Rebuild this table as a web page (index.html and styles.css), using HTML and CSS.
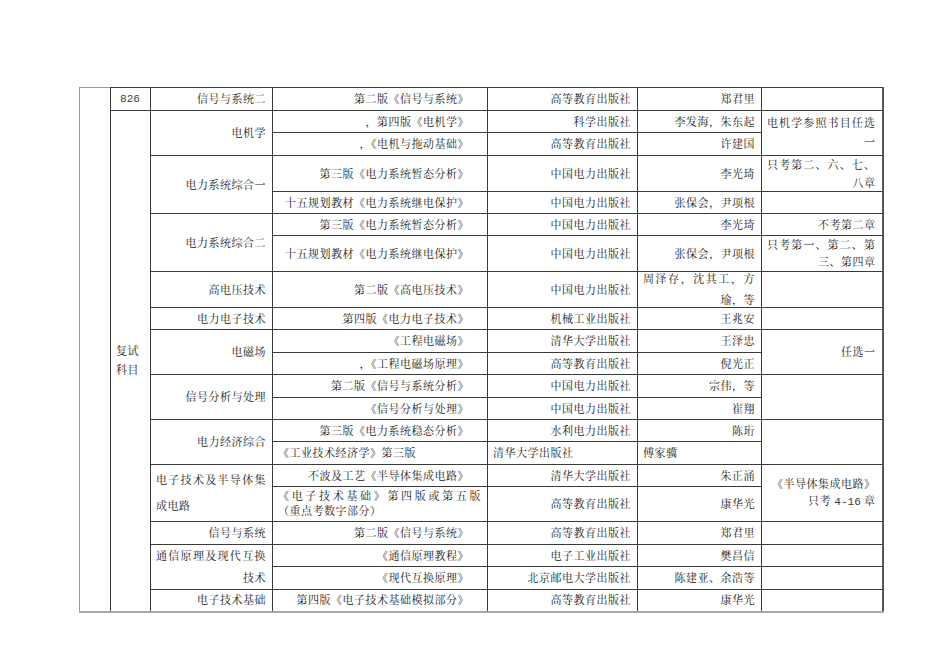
FILE: index.html
```html
<!DOCTYPE html>
<html lang="zh-CN">
<head>
<meta charset="utf-8">
<title>复试科目参考书目</title>
<link rel="stylesheet" href="styles.css">
</head>
<body>
<div class="page">
<table class="books">
  <colgroup>
    <col class="c1"><col class="c2"><col class="c3"><col class="c4"><col class="c5"><col class="c6"><col class="c7">
  </colgroup>
  <tbody>
    <tr class="r23">
      <td rowspan="21" class="blank"></td>
      <td class="center num">826</td>
      <td>信号与系统二</td>
      <td class="bk">第二版《信号与系统》</td>
      <td>高等教育出版社</td>
      <td>郑君里</td>
      <td></td>
    </tr>
    <tr class="r22">
      <td rowspan="20" class="subj lh19">复试科目</td>
      <td rowspan="2">电机学</td>
      <td class="bk">，第四版《电机学》</td>
      <td>科学出版社</td>
      <td>李发海，朱东起</td>
      <td rowspan="2"><div class="ml lh19"><span class="jl">电机学参照书目任选</span><span class="ln">一</span></div></td>
    </tr>
    <tr class="r23">
      <td class="bk">，《电机与拖动基础》</td>
      <td>高等教育出版社</td>
      <td>许建国</td>
    </tr>
    <tr class="r36">
      <td rowspan="2">电力系统综合一</td>
      <td class="bk">第三版《电力系统暂态分析》</td>
      <td>中国电力出版社</td>
      <td>李光琦</td>
      <td><div class="ml lh18"><span class="jl">只考第二、六、七、</span><span class="ln">八章</span></div></td>
    </tr>
    <tr class="r22">
      <td class="bk">十五规划教材《电力系统继电保护》</td>
      <td>中国电力出版社</td>
      <td>张保会，尹项根</td>
      <td></td>
    </tr>
    <tr class="r22">
      <td rowspan="2">电力系统综合二</td>
      <td class="bk">第三版《电力系统暂态分析》</td>
      <td>中国电力出版社</td>
      <td>李光琦</td>
      <td>不考第二章</td>
    </tr>
    <tr class="r36">
      <td class="bk">十五规划教材《电力系统继电保护》</td>
      <td>中国电力出版社</td>
      <td>张保会，尹项根</td>
      <td><div class="ml lh17"><span class="jl">只考第一、第二、第</span><span class="ln">三、第四章</span></div></td>
    </tr>
    <tr class="r36">
      <td>高电压技术</td>
      <td class="bk">第二版《高电压技术》</td>
      <td>中国电力出版社</td>
      <td><div class="ml lh21"><span class="jl">周泽存，沈其工，方</span><span class="ln">瑜，等</span></div></td>
      <td></td>
    </tr>
    <tr class="r22">
      <td>电力电子技术</td>
      <td class="bk">第四版《电力电子技术》</td>
      <td>机械工业出版社</td>
      <td>王兆安</td>
      <td></td>
    </tr>
    <tr class="r23">
      <td rowspan="2">电磁场</td>
      <td class="bk">《工程电磁场》</td>
      <td>清华大学出版社</td>
      <td>王泽忠</td>
      <td rowspan="2">任选一</td>
    </tr>
    <tr class="r22">
      <td class="bk">，《工程电磁场原理》</td>
      <td>高等教育出版社</td>
      <td>倪光正</td>
    </tr>
    <tr class="r23">
      <td rowspan="2">信号分析与处理</td>
      <td class="bk">第二版《信号与系统分析》</td>
      <td>中国电力出版社</td>
      <td>宗伟，等</td>
      <td rowspan="2"></td>
    </tr>
    <tr class="r22">
      <td class="bk">《信号分析与处理》</td>
      <td>中国电力出版社</td>
      <td>崔翔</td>
    </tr>
    <tr class="r22">
      <td rowspan="2">电力经济综合</td>
      <td class="bk">第三版《电力系统稳态分析》</td>
      <td>水利电力出版社</td>
      <td>陈珩</td>
      <td rowspan="2"></td>
    </tr>
    <tr class="r23">
      <td class="left">《工业技术经济学》第三版</td>
      <td class="left">清华大学出版社</td>
      <td class="left">傅家骥</td>
    </tr>
    <tr class="r22">
      <td rowspan="2" class="left"><div class="ml lh26"><span class="jl">电子技术及半导体集</span><span class="ln">成电路</span></div></td>
      <td class="bk">不波及工艺《半导体集成电路》</td>
      <td>清华大学出版社</td>
      <td>朱正涌</td>
      <td rowspan="2"><div class="ml lh17"><span class="ln">《半导体集成电路》</span><span class="ln">只考 <span class="digits">4-16</span> 章</span></div></td>
    </tr>
    <tr class="r35">
      <td class="left"><div class="ml lh15"><span class="jl">《电子技术基础》第四版或第五版</span><span class="ln">（重点考数字部分）</span></div></td>
      <td>高等教育出版社</td>
      <td>康华光</td>
    </tr>
    <tr class="r23">
      <td>信号与系统</td>
      <td class="bk">第二版《信号与系统》</td>
      <td>高等教育出版社</td>
      <td>郑君里</td>
      <td></td>
    </tr>
    <tr class="r22">
      <td rowspan="2"><div class="ml lh22"><span class="jl">通信原理及现代互换</span><span class="ln">技术</span></div></td>
      <td class="bk">《通信原理教程》</td>
      <td>电子工业出版社</td>
      <td>樊昌信</td>
      <td></td>
    </tr>
    <tr class="r23">
      <td class="bk">《现代互换原理》</td>
      <td>北京邮电大学出版社</td>
      <td>陈建亚、余浩等</td>
      <td></td>
    </tr>
    <tr class="r22">
      <td>电子技术基础</td>
      <td class="bk">第四版《电子技术基础模拟部分》</td>
      <td>高等教育出版社</td>
      <td>康华光</td>
      <td></td>
    </tr>
  </tbody>
</table>
</div>
</body>
</html>
```

FILE: styles.css
```css
html, body {
  margin: 0;
  padding: 0;
  background: #ffffff;
}

.page {
  padding: 87px 0 0 79px;
}

.books {
  border-collapse: collapse;
  table-layout: fixed;
  width: 803px;
  font-family: "Liberation Serif", "Noto Serif CJK SC", "Noto Sans CJK SC", serif;
  font-size: 11px;
  letter-spacing: 0.5px;
  color: #1a1a1a;
  border-top: 1px solid #9a9a9a;
  border-left: 1px solid #9a9a9a;
  border-right: 2px solid #555555;
  border-bottom: 2px solid #a8a8a8;
}

.c1 { width: 31px; }
.c2 { width: 40px; }
.c3 { width: 122px; }
.c4 { width: 215px; }
.c5 { width: 150px; }
.c6 { width: 124px; }
.c7 { width: 121px; }

.books td {
  border: 1px solid #3a3a3a;
  padding: 0 6px 0 5px;
  text-align: right;
  vertical-align: middle;
  line-height: 14px;
  white-space: normal;
  overflow: visible;
}

.books td.blank {
  border-left: 1px solid #9a9a9a;
  border-top: 1px solid #9a9a9a;
  border-bottom: 2px solid #a8a8a8;
}

.books td.bk {
  padding-right: 18px;
}

.r22 { height: 22px; }
.r23 { height: 23px; }
.r35 { height: 35px; }
.r36 { height: 36px; }

.books td.center { text-align: center; }
.books td.left { text-align: left; }

.books td.subj {
  text-align: left;
  padding: 0 4px 0 5px;
  word-break: break-all;
  line-height: 19px;
}

.num,
.digits {
  font-family: "Liberation Mono", monospace;
  letter-spacing: 0;
  font-weight: normal;
  color: #3a3a3a;
}

.ml {
  display: block;
}

.jl {
  display: block;
  text-align: justify;
  text-align-last: justify;
}

.ln {
  display: block;
}

.lh15 { line-height: 15px; }
.lh17 { line-height: 17px; }
.lh18 { line-height: 18px; margin: -1px 0; }
.lh19 { line-height: 19px; }
.lh21 { line-height: 21px; margin: -4px 0; }
.lh22 { line-height: 22px; margin: -1px 0; }
.lh26 { line-height: 26px; }
```
